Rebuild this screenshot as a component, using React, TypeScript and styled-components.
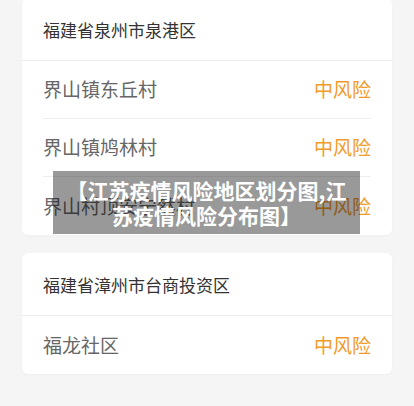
import React from 'react';
import styled, { createGlobalStyle } from 'styled-components';

type RowType = {
  name: string,
  level: string,
};

type AreaType = {
  title: string,
  rows: RowType[],
};

const areas: AreaType[] = [
  {
    title: '福建省泉州市泉港区',
    rows: [
      { name: '界山镇东丘村', level: '中风险' },
      { name: '界山镇鸠林村', level: '中风险' },
      { name: '界山村顶安宁然村', level: '中风险' },
    ],
  },
  {
    title: '福建省漳州市台商投资区',
    rows: [
      { name: '福龙社区', level: '中风险' },
    ],
  },
];

export default function App() {
  return (
    <>
      <GlobalStyle />
      <Page>
        {areas.map((area, i) => (
          <Card key={i} first={i === 0}>
            <CardHeader>{area.title}</CardHeader>
            <RowList>
              {area.rows.map((row, j) => (
                <Row key={j}>
                  <RowName>{row.name}</RowName>
                  <Level>{row.level}</Level>
                </Row>
              ))}
            </RowList>
          </Card>
        ))}
        <Banner>【江苏疫情风险地区划分图,江苏疫情风险分布图】</Banner>
      </Page>
    </>
  );
}

const GlobalStyle = createGlobalStyle`
  html, body {
    margin: 0;
    padding: 0;
    background: #f5f5f5;
  }
  body {
    font-family: "Noto Sans CJK SC", "Noto Sans", sans-serif;
  }
`;

const Page = styled.div`
  position: relative;
  width: 414px;
  height: 406px;
  overflow: hidden;
  padding: 0 22px;
  box-sizing: border-box;
  display: flex;
  flex-direction: column;
  gap: 18px;
`;

const Card = styled.div<{ first?: boolean }>`
  background: #ffffff;
  border-radius: 6px;
  box-shadow: 0 1px 3px 0px #00000008;
  margin-top: ${(props) => (props.first ? '-2px' : '0px')};
`;

const CardHeader = styled.div`
  height: 62px;
  display: flex;
  align-items: center;
  padding: 0 21px;
  font-size: 17px;
  color: #333333;
  border-bottom: 1px solid #ececec;
`;

const RowList = styled.div`
  padding: 0 21px;
`;

const Row = styled.div`
  height: 57px;
  display: flex;
  align-items: center;
  justify-content: space-between;
  border-bottom: 1px solid #eeeeee;

  &:last-child {
    height: 58px;
    border-bottom: none;
  }
`;

const RowName = styled.div`
  font-size: 19px;
  color: #666666;
  margin-top: -2px;
`;

const Level = styled.div`
  font-size: 19px;
  color: #f29b2a;
  margin-top: -2px;
`;

const Banner = styled.div`
  position: absolute;
  left: 53px;
  top: 171px;
  width: 307px;
  height: 63px;
  box-sizing: border-box;
  padding: 2px 10px;
  background: rgba(0, 0, 0, 0.4);
  color: #ffffff;
  font-size: 21px;
  font-weight: 700;
  line-height: 25px;
  text-align: center;
  display: flex;
  align-items: center;
  justify-content: center;
`;
